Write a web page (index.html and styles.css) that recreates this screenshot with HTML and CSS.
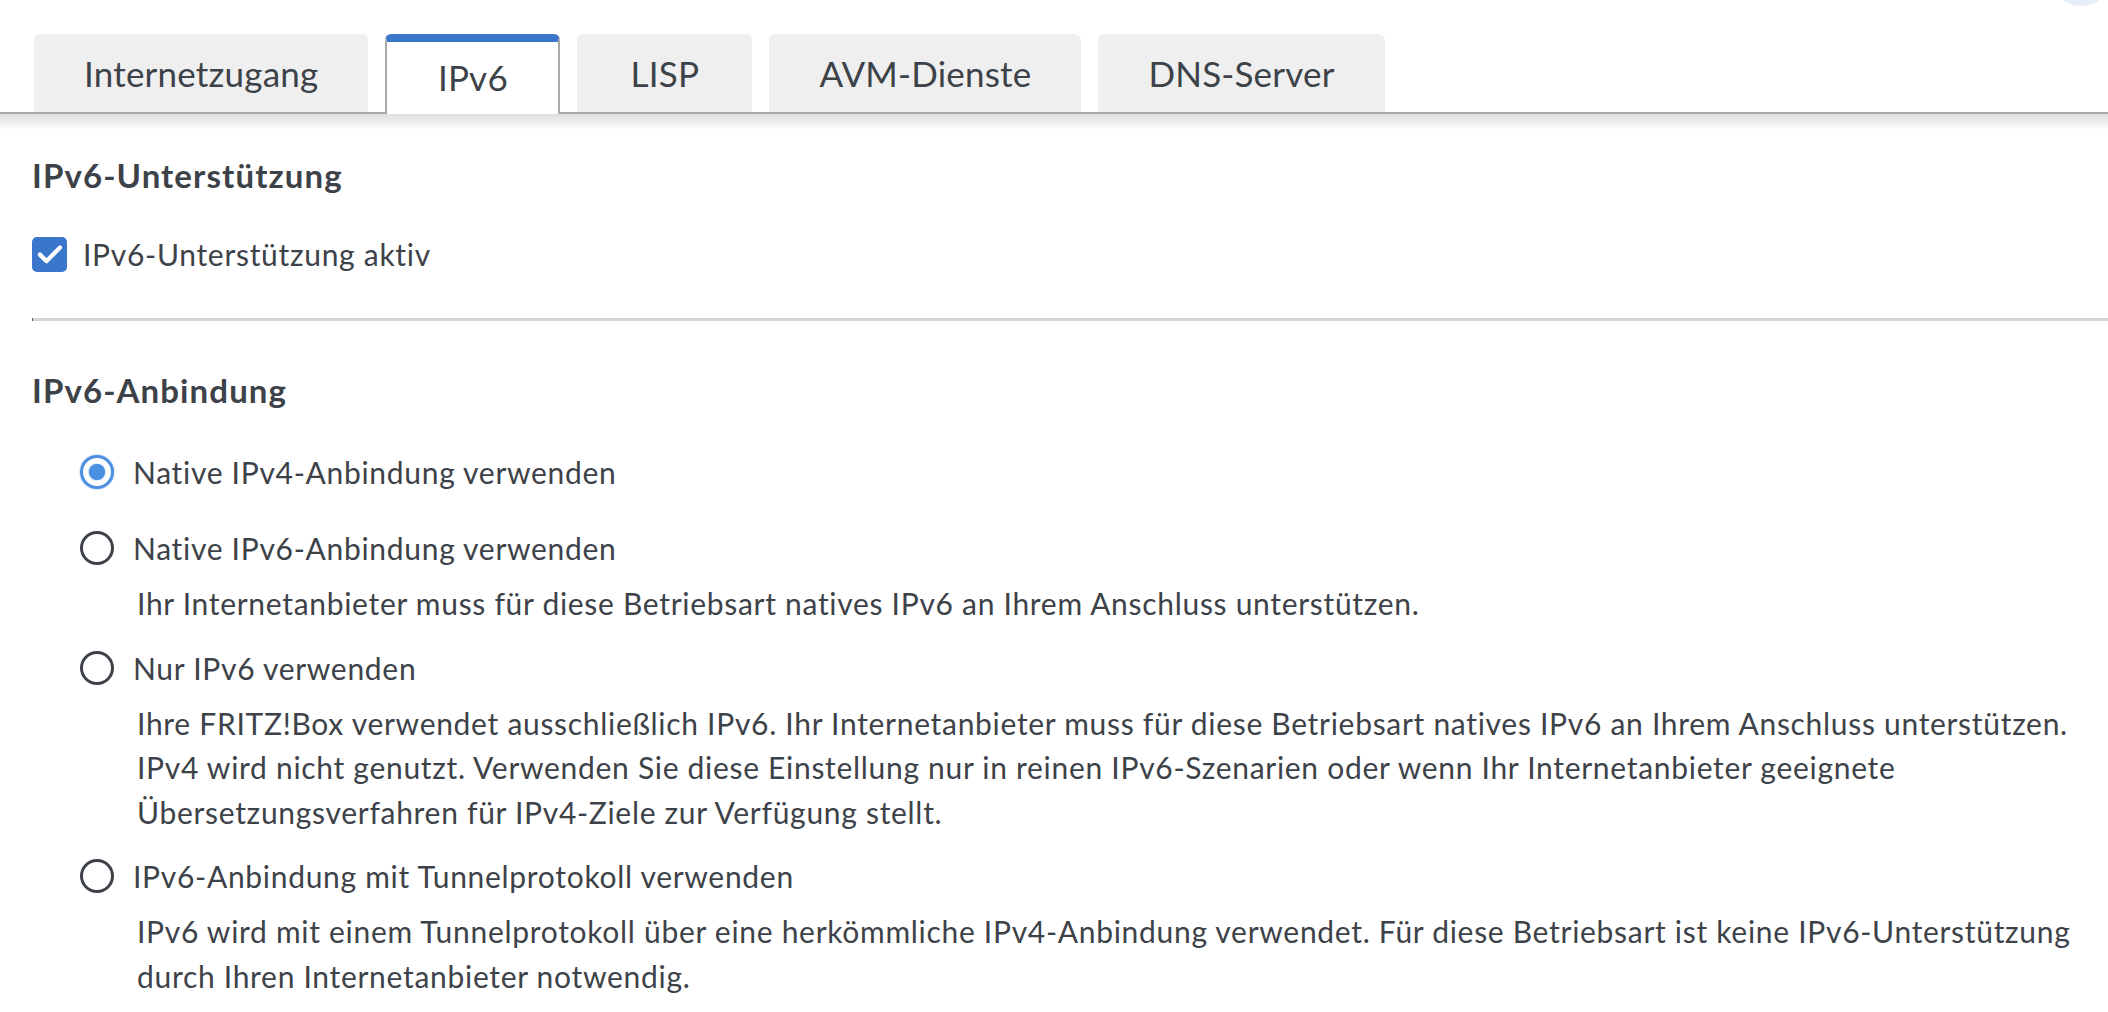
FILE: index.html
```html
<!DOCTYPE html>
<html lang="de">
<head>
<meta charset="utf-8">
<title>Internet – IPv6</title>
<link rel="stylesheet" href="styles.css">
</head>
<body>
  <span class="user-bubble" aria-hidden="true"></span>

  <nav class="tabbar">
    <a class="tab">Internetzugang</a>
    <a class="tab tab--active">IPv6</a>
    <a class="tab">LISP</a>
    <a class="tab">AVM-Dienste</a>
    <a class="tab">DNS-Server</a>
  </nav>
  <div class="tabbar-shade"></div>

  <main class="content">
    <section class="block">
      <h2 class="block-title">IPv6-Unterstützung</h2>
      <label class="check">
        <span class="check-box">
          <svg viewBox="0 0 24 24" width="30" height="30"><path d="M4 12.5l5.2 5.2L20 6.8" fill="none" stroke="#fff" stroke-width="3.4" stroke-linecap="round" stroke-linejoin="round"/></svg>
        </span>
        <span class="check-label">IPv6-Unterstützung aktiv</span>
      </label>
    </section>

    <hr class="divider">

    <section class="block">
      <h2 class="block-title block-title--second">IPv6-Anbindung</h2>
      <div class="options">
        <div class="option option--plain">
          <span class="radio radio--on"></span>
          <span class="option-label">Native IPv4-Anbindung verwenden</span>
        </div>
        <div class="option">
          <span class="radio"></span>
          <span class="option-label">Native IPv6-Anbindung verwenden</span>
        </div>
        <p class="option-desc">Ihr Internetanbieter muss für diese Betriebsart natives IPv6 an Ihrem Anschluss unterstützen.</p>
        <div class="option">
          <span class="radio"></span>
          <span class="option-label">Nur IPv6 verwenden</span>
        </div>
        <p class="option-desc">Ihre FRITZ!Box verwendet ausschließlich IPv6. Ihr Internetanbieter muss für diese Betriebsart natives IPv6 an Ihrem Anschluss unterstützen. IPv4 wird nicht genutzt. Verwenden Sie diese Einstellung nur in reinen IPv6-Szenarien oder wenn Ihr Internetanbieter geeignete Übersetzungsverfahren für IPv4-Ziele zur Verfügung stellt.</p>
        <div class="option">
          <span class="radio"></span>
          <span class="option-label">IPv6-Anbindung mit Tunnelprotokoll verwenden</span>
        </div>
        <p class="option-desc">IPv6 wird mit einem Tunnelprotokoll über eine herkömmliche IPv4-Anbindung verwendet. Für diese Betriebsart ist keine IPv6-Unterstützung durch Ihren Internetanbieter notwendig.</p>
      </div>
    </section>
  </main>
  <div class="next-section"></div>
</body>
</html>
```

FILE: styles.css
```css
* {
  box-sizing: border-box;
}

html, body {
  margin: 0;
  background: #ffffff;
}

body {
  position: relative;
  overflow: hidden;
  font-family: Lato, "Open Sans", sans-serif;
  font-size: 30px;
  letter-spacing: 0.7px;
  color: #3d4249;
}

/* round avatar button peeking in at the top right */
.user-bubble {
  position: absolute;
  top: -56px;
  right: -4px;
  width: 62px;
  height: 62px;
  border-radius: 50%;
  background: #e8eef8;
}

/* ---------- tab bar ---------- */
.tabbar {
  display: flex;
  align-items: flex-end;
  gap: 17px;
  padding: 34px 0 0 34px;
  border-bottom: 2px solid #a9a9a9;
}

.tab {
  min-width: 175px;
  height: 78px;
  padding: 0 50px;
  display: flex;
  align-items: center;
  justify-content: center;
  background: #efefef;
  border-radius: 6px 6px 0 0;
  font-size: 35px;
  letter-spacing: 0.2px;
  color: #3d4249;
  cursor: pointer;
}

.tab--active {
  position: relative;
  z-index: 1;
  height: 80px;
  margin-bottom: -2px;
  padding: 0 48px 2px;
  background: #ffffff;
  border: 2px solid #a9a9a9;
  border-top: 8px solid #3a76c9;
  border-bottom: none;
}

.tabbar-shade {
  height: 16px;
  background: linear-gradient(#dedede, #ffffff);
}

/* ---------- content ---------- */
.content {
  padding: 0 0 0 32px;
}

.block-title {
  margin: 25px 0 0;
  font-size: 33px;
  letter-spacing: 1.1px;
  line-height: 40px;
  font-weight: 700;
  color: #3d4249;
}

.block-title--second {
  margin-top: 49px;
}

.check {
  display: flex;
  align-items: center;
  gap: 16px;
  height: 44px;
  margin-top: 37px;
}

.check-box {
  width: 35px;
  height: 35px;
  border-radius: 5px;
  background: #3a76cc;
  display: flex;
  align-items: center;
  justify-content: center;
}

.check-label {
  line-height: 44px;
}

.divider {
  margin: 42px 0 0;
  height: 3px;
  border: none;
  border-left: 1px solid #555a60;
  background: #d6d6d6;
}

/* ---------- radio options ---------- */
.options {
  margin-top: 40px;
  padding-left: 48px;
  padding-right: 16px;
}

.option {
  display: flex;
  align-items: center;
  gap: 19px;
  height: 44px;
}

.option--plain {
  margin-bottom: 32px;
}

.radio {
  flex: none;
  width: 34px;
  height: 34px;
  border-radius: 50%;
  border: 3px solid #3d4249;
}

.radio--on {
  border-color: #4a8fe0;
  box-shadow: 0 0 1.5px #4a8fe0;
  position: relative;
}

.radio--on::after {
  content: "";
  position: absolute;
  left: 6px;
  top: 6px;
  width: 16px;
  height: 16px;
  border-radius: 50%;
  background: #4a8fe0;
  box-shadow: 0 0 1.5px #4a8fe0;
}

.option-label {
  line-height: 44px;
}

.option-desc {
  margin: 11px 0 20px;
  padding-left: 57px;
  line-height: 44.5px;
}

.next-section {
  height: 4px;
  margin-top: 10px;
  background: #d6d6d6;
}
```
